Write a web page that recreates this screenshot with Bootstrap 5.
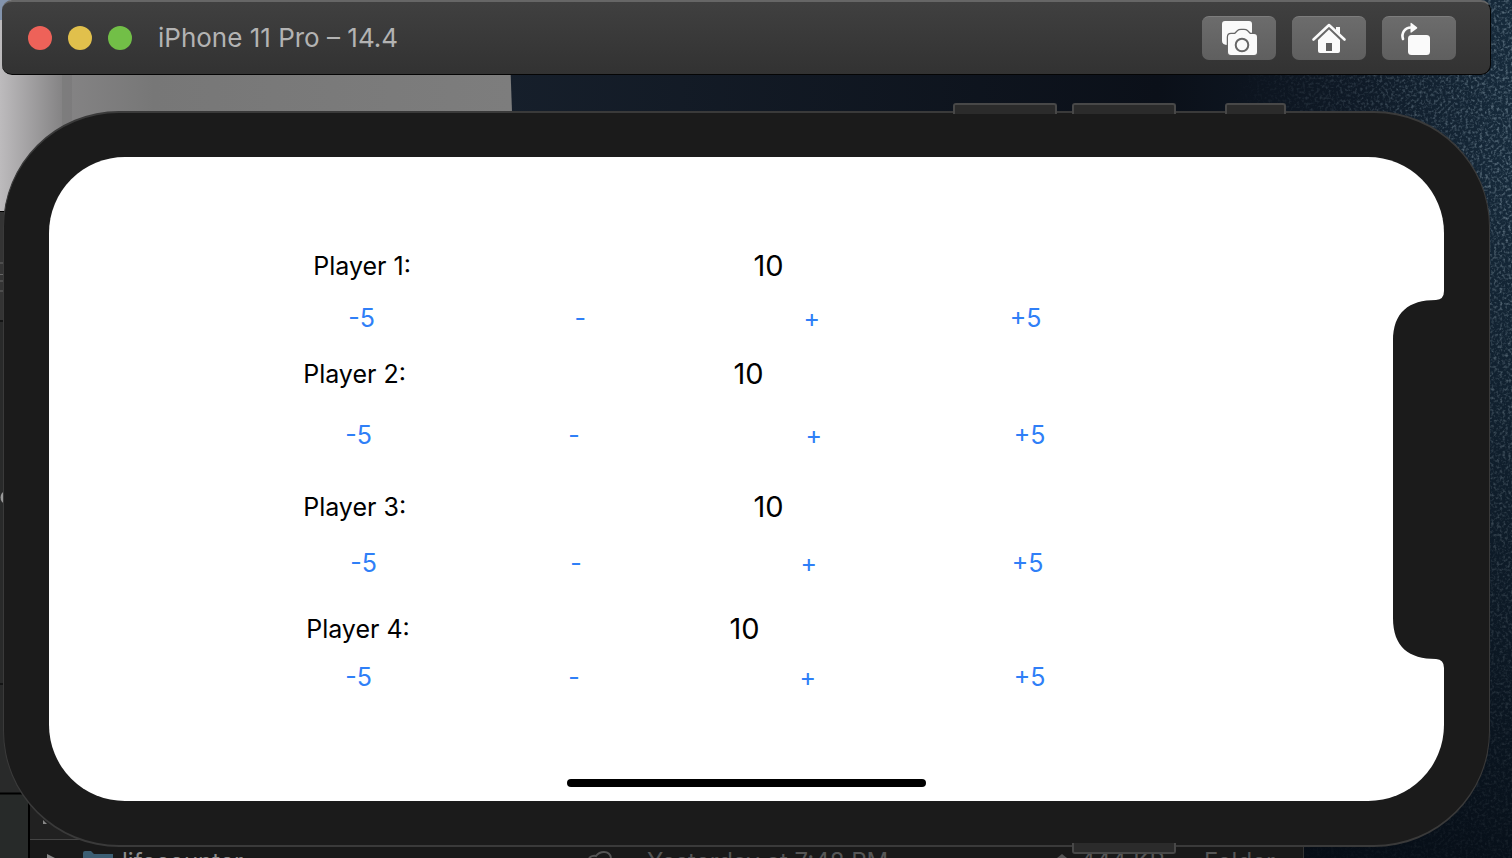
<!DOCTYPE html>
<html lang="en">
<head>
<meta charset="utf-8">
<meta name="viewport" content="width=device-width, initial-scale=1">
<title>iPhone 11 Pro – 14.4</title>
<link href="https://cdn.jsdelivr.net/npm/bootstrap@5.3.0/dist/css/bootstrap.min.css" rel="stylesheet">
<style>
  body { font-family: Inter, "Liberation Sans", sans-serif; background: #0b1521; }
  .desktop { min-height: 100vh; }
  .backdrop { z-index: 0; }
  .simulator { z-index: 1; margin: 0 21px 0 2px; padding-bottom: 11px; }

  .titlebar {
    height: 75px; padding: 0 34px 0 26px;
    background: linear-gradient(#404040, #323232);
    border: 1px solid #050505; border-top: 2px solid #666; border-width: 2px 1px 1px 0;
    border-radius: 10px;
  }
  .light { width: 24px; height: 24px; border: 0; padding: 0; border-radius: 50%; }
  .light-close { background: #ee6259; }
  .light-min { background: #e1c04c; }
  .light-zoom { background: #72bf47; }
  .title-text { font-size: 26px; font-weight: 400; line-height: 32px; color: #b3b3b3; margin: 0 0 0 26px; }
  .tool {
    width: 74px; height: 44px; padding: 0; border: 0; border-radius: 7px;
    background: linear-gradient(#6c6c6c, #5f5f5f); border-top: 1px solid #7d7d7d;
  }
  .tool svg { display: block; }

  .device {
    margin: 36px 1px 0 1px; padding: 44px 45px; background: #1b1b1b;
    border: 2px solid #3a3a3a; border-width: 2px 1px 2px 1px; border-radius: 116px;
  }
  .screen { background: #fff; border-radius: 76px; padding-top: 91px; padding-bottom: 14px; overflow: hidden; }
  .notch { right: 0; top: 131px; }
  .side-key {
    height: 11px; background: #2b2b2b; border: 2px solid #484848; border-bottom: 0;
    border-radius: 3px 3px 0 0; top: -10px;
  }
  .side-key-low { top: auto; bottom: -9px; border-bottom: 2px solid #484848; border-top: 0; border-radius: 0 0 3px 3px; }

  .line { display: grid; line-height: 36px; font-size: 25px; color: #000; }
  .line output { font-size: 29px; }
  .line button {
    border: 0; padding: 0; background: none; text-align: left; color: #2f7ff7; line-height: 36px; justify-self: start;
  }
  .line > :first-child { grid-column-start: 2; }
  .gap-s { margin-top: 12px; }
  .gap-a { margin-top: 16px; }
  .gap-b { margin-top: 20px; }
  .gap-c { margin-top: 25px; }
  .gap-d { margin-top: 36px; }
  .gap-e { margin-top: 30px; }
  .head-1 { grid-template-columns: 264fr 440fr 690fr; }
  .head-2 { grid-template-columns: 254fr 430fr 710fr; }
  .head-3 { grid-template-columns: 254fr 450fr 690fr; }
  .head-4 { grid-template-columns: 257fr 423fr 714fr; }
  .keys-1 { grid-template-columns: 299fr 226fr 229fr 206fr 434fr; }
  .keys-2 { grid-template-columns: 296fr 223fr 237fr 208fr 430fr; }
  .keys-3 { grid-template-columns: 301fr 220fr 230fr 211fr 432fr; }
  .keys-4 { grid-template-columns: 296fr 223fr 231fr 214fr 430fr; }
  .home-bar { width: 359px; height: 8px; margin: 84px auto 0; border-radius: 4px; background: #000; }

  .finder-row { left: 30px; right: 208px; bottom: 0; height: 12px; padding-left: 16px; line-height: 32px; font-size: 24px; color: #565656; overflow: hidden; white-space: nowrap; }
  .file-name { color: #8c8c8c; }
</style>
</head>
<body>
<div class="desktop position-relative overflow-hidden">
  <div class="backdrop position-absolute top-0 start-0 w-100 h-100" aria-hidden="true">
    <svg class="d-block" width="100%" height="100%" viewBox="0 0 1512 858" preserveAspectRatio="none">
      <defs>
        <linearGradient id="wall"><stop offset="0" stop-color="#bdbbbd"/><stop offset=".12" stop-color="#858485"/><stop offset=".3" stop-color="#777"/><stop offset="1" stop-color="#7d7d7d"/></linearGradient>
        <linearGradient id="denim"><stop offset="0" stop-color="#161f2b"/><stop offset=".65" stop-color="#0b1019"/><stop offset=".85" stop-color="#0f1a27"/><stop offset="1" stop-color="#162a3b"/></linearGradient>
        <linearGradient id="fall" x2="0" y2="1"><stop offset=".2" stop-color="#040a12" stop-opacity="0"/><stop offset="1" stop-color="#040a12" stop-opacity=".8"/></linearGradient>
        <linearGradient id="fade"><stop offset=".1" stop-color="#000"/><stop offset="1" stop-color="#fff"/></linearGradient>
        <mask id="m"><rect x="1200" width="312" height="858" fill="url(#fade)"/></mask>
        <filter id="grain" x="0" y="0" width="1" height="1"><feTurbulence type="fractalNoise" baseFrequency=".35" numOctaves="2" seed="4"/><feColorMatrix values="0 0 0 0 .4  0 0 0 0 .52  0 0 0 0 .6  2.6 0 0 0 -1.2"/></filter>
      </defs>
      <rect x="500" width="1012" height="858" fill="url(#denim)"/>
      <g mask="url(#m)"><rect x="1200" width="312" height="858" filter="url(#grain)" opacity=".5"/></g>
      <rect x="1200" width="312" height="858" fill="url(#fall)"/>
      <path d="M0 0H508L512 112V211H0z" fill="url(#wall)"/>
      <path d="M62 75h10v50h-10z" fill="#6f6f6f" opacity=".35"/>
      <path d="M0 0h10v20H0z" fill="#8394ad"/>
      <path d="M0 211h100v647H0z" fill="#292a2a"/>
      <path d="M0 211h4v109H0z" fill="#343434"/>
      <path d="M0 263h4M0 274.500h4M0 281h4M0 291h4" stroke="#666"/>
      <path d="M0 211.500h4M0 321h4M0 684h4" stroke="#000"/>
      <path d="M5 491a7 7 0 0 0 0 13z" fill="#999"/>
      <path d="M0 794h30v64H0z" fill="#272a29"/>
      <path d="M0 793.500h29V858" fill="none" stroke="#000" stroke-width="2"/>
      <path d="M30 794H1304V858H30z" fill="#191919"/>
      <path d="M30 794h150v45H30z" fill="#212121"/>
      <path d="M30 839.500h100" stroke="#444"/>
      <path d="M1303.500 840v18" stroke="#333"/>
      <path d="M43 820l4 4h-4z" fill="#888"/>
      <path d="M47 854l8 4h-8z" fill="#888"/>
      <path d="M83 858v-5q0-2 2-2h6l3 3h19v4z" fill="#3c5e73"/>
      <path d="M589 858q3-3 7-2q3-4 8-4q6 0 7 6" fill="none" stroke="#555" stroke-width="2"/>
      <path d="M1057 858l5-4l5 4z" fill="#555"/>
    </svg>
    <div class="finder-row position-absolute d-grid" style="grid-template-columns:76fr 525fr 433fr 124fr 100fr">
      <span></span><span class="file-name">lifecounter</span><span>Yesterday at 7:48 PM</span><span>444 KB</span><span>Folder</span>
    </div>
  </div>

  <main class="simulator position-relative">
    <header class="titlebar d-flex align-items-center">
      <div class="d-flex gap-3">
        <button class="light light-close" aria-label="Close"></button>
        <button class="light light-min" aria-label="Minimize"></button>
        <button class="light light-zoom" aria-label="Zoom"></button>
      </div>
      <h1 class="title-text">iPhone 11 Pro – 14.4</h1>
      <div class="d-flex gap-3 ms-auto">
        <button class="tool" aria-label="Screenshot">
          <svg width="74" height="43" viewBox="1202 17 74 43"><path d="M1225 21h24q3 0 3 3v20h-24v1q-6 0-6-4V24q0-3 3-3z" fill="#fafafa"/><path d="M1231 34h4l3-3q1-1 3-1h3q2 0 3 1l3 3h4q3 0 3 3v15q0 3-3 3h-23q-3 0-3-3V37q0-3 3-3z" fill="#fafafa" stroke="#666" stroke-width="2.500" paint-order="stroke"/><circle cx="1242" cy="45" r="6.300" fill="none" stroke="#666" stroke-width="2"/></svg>
        </button>
        <button class="tool" aria-label="Home">
          <svg width="74" height="43" viewBox="1292 17 74 43"><path d="M1313.500 39.500L1329 25l15.500 14.500" fill="none" stroke="#fafafa" stroke-width="2.600" stroke-linecap="round" stroke-linejoin="round"/><path d="M1336 27h4v7l-4-4z" fill="#fafafa"/><path d="M1329 29.500l11 10.500v11q0 2-2 2h-18q-2 0-2-2V40z" fill="#fafafa"/><path d="M1326 43h6v8h-6z" fill="#5f5f5f"/></svg>
        </button>
        <button class="tool" aria-label="Rotate">
          <svg width="74" height="43" viewBox="1382 17 74 43"><rect x="1408" y="35" width="22" height="20" rx="3.500" fill="#fafafa"/><path d="M1403 39c-2-6 2-11.500 8-11.500" fill="none" stroke="#fafafa" stroke-width="2.600" stroke-linecap="round"/><path d="M1410.500 23.500q0-1 1-.5l5.500 4.300q.7.700 0 1.200l-5.500 4q-1 .5-1-.5z" fill="#fafafa"/></svg>
        </button>
      </div>
    </header>

    <section class="device position-relative" aria-label="Device">
      <i class="side-key position-absolute" style="left:63.9%;width:7%"></i>
      <i class="side-key position-absolute" style="left:71.9%;width:7%"></i>
      <i class="side-key position-absolute" style="left:82.2%;width:4.1%"></i>
      <i class="side-key side-key-low position-absolute" style="left:71.9%;width:7%"></i>

      <div class="screen position-relative">
        <div class="line head-1 align-items-center"><span>Player 1:</span><output>10</output></div>
        <div class="line keys-1 gap-a"><button>-5</button><button>-</button><button>+</button><button>+5</button></div>

        <div class="line head-2 gap-b align-items-center"><span>Player 2:</span><output>10</output></div>
        <div class="line keys-2 gap-c"><button>-5</button><button>-</button><button>+</button><button>+5</button></div>

        <div class="line head-3 gap-d align-items-center"><span>Player 3:</span><output>10</output></div>
        <div class="line keys-3 gap-b"><button>-5</button><button>-</button><button>+</button><button>+5</button></div>

        <div class="line head-4 gap-e align-items-center"><span>Player 4:</span><output>10</output></div>
        <div class="line keys-4 gap-s"><button>-5</button><button>-</button><button>+</button><button>+5</button></div>

        <div class="home-bar"></div>
        <svg class="notch position-absolute" width="51" height="383" viewBox="0 0 51 383" aria-hidden="true">
          <path d="M51 0V3Q51 11.500 43 12C16 12 0 24 0 53V330C0 359 16 371 43 371Q51 371.500 51 380V383z" fill="#1b1b1b"/>
        </svg>
      </div>
    </section>
  </main>
</div>
<script src="https://cdn.jsdelivr.net/npm/bootstrap@5.3.0/dist/js/bootstrap.bundle.min.js"></script>
</body>
</html>
